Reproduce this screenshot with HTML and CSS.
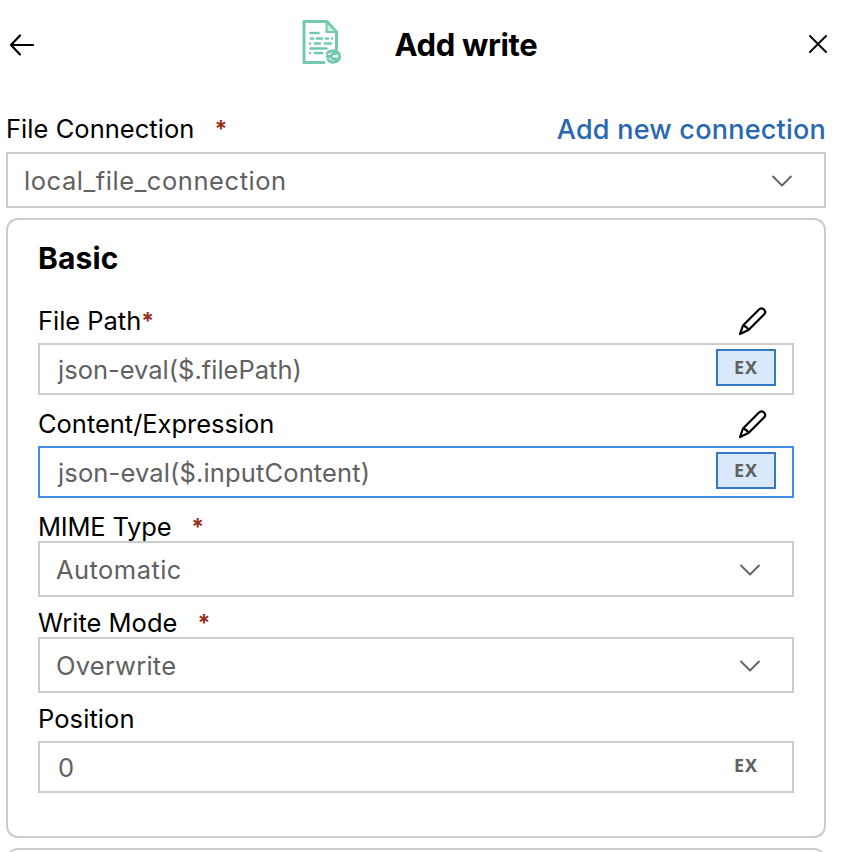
FILE: index.html
```html
<!DOCTYPE html>
<html lang="en">
<head>
<meta charset="utf-8">
<title>Add write</title>
<link rel="stylesheet" href="styles.css">
</head>
<body>
<header class="header">
  <svg class="back" width="28" height="24" viewBox="0 0 28 24"><path d="M25 12H3M12 2.500L3 12l9 9.500"/></svg>
  <div class="heading">
    <svg class="file-icon" width="42" height="48" viewBox="0 0 42 48">
      <path class="sheet" d="M24 44.500H4V3.500h23l9.500 10.500V31"/>
      <path class="fold" d="M26.500 3.500V14h10z"/>
      <path class="lines" d="M10.500 15h8M11 20.500h2m4 0h5m4 0h2m4 0h0M10 25.500h0m5 0h5m5 0h6M10.500 30.500h16M10 35h0m5 0h7"/>
      <path class="swirl" d="M27 35.500c3-4 12-3.500 12.500 2.500S31 46.500 28 41.500"/>
      <path class="swirl" d="M36.500 35.500h-3.500l-2.500 3h-3.500m3.500 0l2.500 2.500h3.500"/>
    </svg>
    <h1 class="title">Add write</h1>
  </div>
  <svg class="close" width="20" height="20" viewBox="0 0 20 20"><path d="M2 2l16 16M18 2L2 18"/></svg>
</header>
<main class="form">
  <div class="label connection"><span><span class="t-conn">File Connection</span><b class="star spaced">*</b></span><a class="link">Add new connection</a></div>
  <div class="select"><span class="t-local">local_file_connection</span><svg class="chevron" width="22" height="12" viewBox="0 0 22 12"><path d="M2 1.500l9 9 9-9"/></svg></div>
  <section class="card">
    <h2 class="card-title">Basic</h2>
    <div class="label path"><span><span class="t-path">File Path</span><b class="star">*</b></span><svg class="pencil" width="30" height="30" viewBox="0 0 30 30"><path d="M2 28l3-8.500L21 3.500q2.500-2.500 5 0t0 5L10.500 24zM5 19.500q4 1 5.500 4.500"/></svg></div>
    <div class="input"><span class="t-eval1">json-eval($.filePath)</span><span class="ex active">EX</span></div>
    <div class="label content"><span class="t-content">Content/Expression</span><svg class="pencil" width="30" height="30" viewBox="0 0 30 30"><path d="M2 28l3-8.500L21 3.500q2.500-2.500 5 0t0 5L10.500 24zM5 19.500q4 1 5.500 4.500"/></svg></div>
    <div class="input focused"><span class="t-eval2">json-eval($.inputContent)</span><span class="ex active">EX</span></div>
    <div class="label mime"><span><span class="t-mime">MIME Type</span><b class="star spaced">*</b></span></div>
    <div class="select"><span class="t-auto">Automatic</span><svg class="chevron" width="22" height="12" viewBox="0 0 22 12"><path d="M2 1.500l9 9 9-9"/></svg></div>
    <div class="label mode"><span><span class="t-mode">Write Mode</span><b class="star spaced">*</b></span></div>
    <div class="select"><span class="t-over">Overwrite</span><svg class="chevron" width="22" height="12" viewBox="0 0 22 12"><path d="M2 1.500l9 9 9-9"/></svg></div>
    <div class="label position"><span class="t-pos">Position</span></div>
    <div class="input"><span class="t-zero">0</span><span class="ex">EX</span></div>
  </section>
  <section class="card next"></section>
</main>
</body>
</html>
```
FILE: styles.css
```css
* { box-sizing: border-box; }
body {
  margin: 0;
  height: 852px;
  overflow: hidden;
  background: #fff;
  color: #000;
  font: 25.5px/32px Inter, "Liberation Sans", sans-serif;
  letter-spacing: -0.03px;
}
svg { display: block; fill: none; stroke-linecap: round; stroke-linejoin: round; flex: none; }
h1, h2 { margin: 0; }
.header {
  display: flex;
  justify-content: space-between;
  height: 106px;
  padding: 0 22px 0 8px;
}
.back { margin-top: 33px; stroke: #000; stroke-width: 2.2; }
.close { margin-top: 34px; stroke: #111; stroke-width: 2.1; }
.heading { display: flex; width: 238px; margin-right: 7px; }
.file-icon { margin-top: 18px; stroke: #73c8ae; stroke-width: 2; }
.sheet { stroke-width: 3; }
.fold { fill: #cdebe1; }
.lines { stroke-width: 2.6; }
.swirl { stroke-width: 2.8; }
.title { margin: 29px 0 0 53px; font-size: 31px; font-weight: 700; letter-spacing: -0.35px; white-space: nowrap; }
.form { height: 746px; overflow: hidden; padding: 0 24px 0 6px; }
.label { display: flex; justify-content: space-between; align-items: flex-start; white-space: nowrap; }
.star { color: #942f1c; font-weight: 700; font-size: 23px; line-height: 1; vertical-align: 1px; }
.spaced { margin-left: 20px; }
.connection { height: 46px; padding-top: 7px; }
.t-conn { letter-spacing: 0.04px; }
.t-mime { letter-spacing: -0.2px; }
.t-mode { letter-spacing: 0; }
.link { color: #2868b0; font-size: 27px; font-weight: 500; letter-spacing: 0.23px; padding-top: 1px; }
.select, .input {
  display: flex;
  align-items: center;
  justify-content: space-between;
  border: 2px solid #ccc;
  color: #616161;
}
.select { height: 56px; padding: 2px 31px 0 16px; }
.input { height: 52px; padding: 0 16px 0 18px; }
.focused { border-color: #408ee5; }
.t-local { letter-spacing: 0.56px; }
.t-eval1, .t-eval2, .t-zero { padding-top: 2px; }
.t-eval1 { letter-spacing: 0; }
.t-eval2 { letter-spacing: 0.14px; }
.t-auto { letter-spacing: 0.45px; }
.t-over { letter-spacing: 0.25px; }
.t-pos { letter-spacing: 0.08px; }
.chevron { stroke: #616161; stroke-width: 1.8; }
.card {
  height: 620px;
  margin-top: 10px;
  padding: 0 30px;
  border: 2px solid #ccc;
  border-radius: 12px;
}
.next { height: 60px; }
.card-title { height: 77px; padding-top: 22px; font-size: 30px; font-weight: 700; letter-spacing: 0.15px; }
.path { height: 46px; padding-top: 8px; }
.content { height: 51px; padding-top: 13px; }
.mime { height: 43px; padding-top: 13px; }
.mode { height: 40px; padding-top: 10px; }
.position { height: 48px; padding-top: 10px; }
.pencil { margin: 1px 26px 0 0; stroke: #000; stroke-width: 2.2; }
.ex {
  width: 60px;
  height: 37px;
  margin-bottom: 3px;
  border: 2px solid transparent;
  color: #616161;
  font: 700 18px/32px "Noto Sans", sans-serif;
  letter-spacing: 1px;
  text-align: center;
}
.active { border-color: #3478c6; background: #dae8fb; }
```
